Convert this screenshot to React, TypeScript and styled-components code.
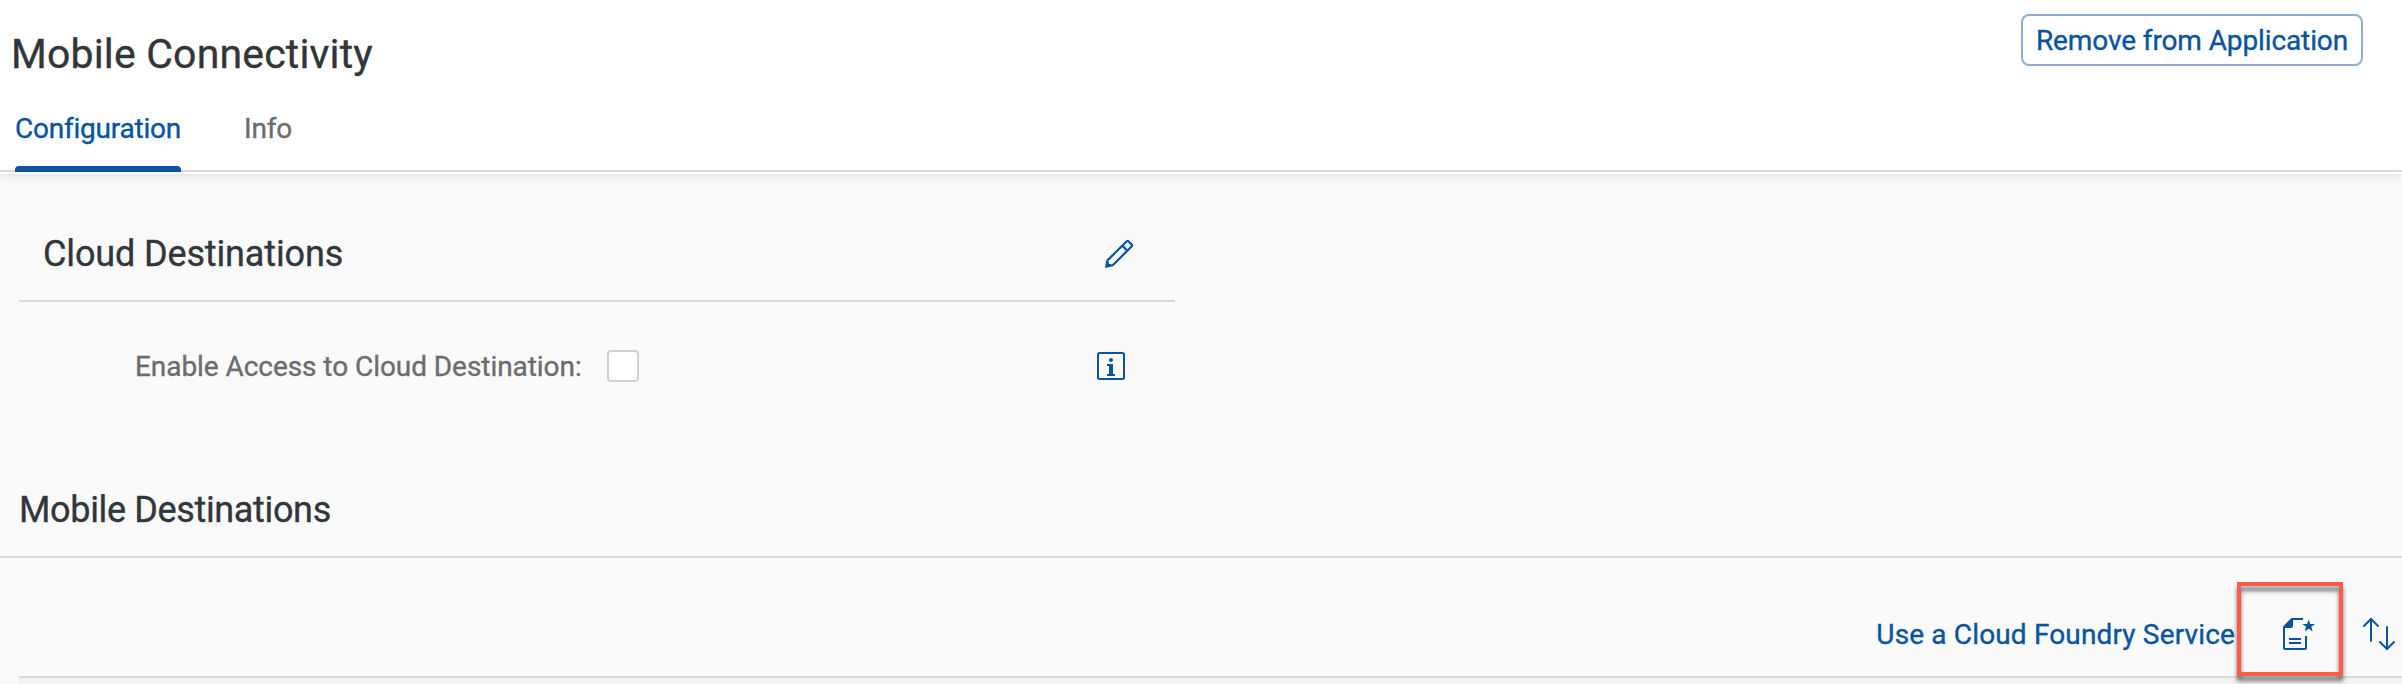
import React from 'react';
import styled, { createGlobalStyle } from 'styled-components';

const blue = '#0854a0';
const ink = '#32363a';
const muted = '#6a6d70';
const line = '#d9d9d9';

const GlobalStyle = createGlobalStyle`
  *, *::before, *::after { box-sizing: border-box; }
  body {
    margin: 0;
    background: #fafafa;
    color: ${ink};
    font-family: Roboto, "Open Sans", sans-serif;
    font-size: 28px;
    -webkit-text-stroke: 0.35px currentColor;
    overflow: hidden;
  }
  button { font: inherit; background: none; border: 0; margin: 0; padding: 0; }
  h1, h2 { margin: 0; font-weight: 400; }
  svg { display: block; }
`;

const Page = styled.div`
  display: flex;
  flex-direction: column;
  height: 684px;
  overflow: hidden;
`;

const Header = styled.header`
  display: flex;
  flex-direction: column;
  height: 174px;
  flex: none;
  background: #fff;
  box-shadow: 0 2px 8px rgba(0, 0, 0, 0.1);
`;

const TitleRow = styled.div`
  display: flex;
  align-items: flex-start;
  justify-content: space-between;
  height: 104px;
  padding: 14px 39px 0 11px;
`;

const PageTitle = styled.h1`
  margin-top: 16px;
  font-size: 41px;
  line-height: 48px;
  letter-spacing: 0.17px;
`;

const OutlineButton = styled.button`
  width: 342px;
  height: 52px;
  padding-top: 1px;
  border: 2px solid #8caed2;
  border-radius: 8px;
  color: ${blue};
  line-height: 47px;
  letter-spacing: -0.11px;
  white-space: nowrap;
`;

const TabBar = styled.nav`
  display: flex;
  gap: 63px;
  height: 68px;
  padding-left: 15px;
  border-bottom: 2px solid ${line};
`;

const Tab = styled.button<{ $active?: boolean }>`
  display: flex;
  flex-direction: column;
  justify-content: space-between;
  height: 68px;
  padding-top: 5px;
  color: ${p => (p.$active ? blue : muted)};
  line-height: 40px;
  letter-spacing: -0.22px;
  width: ${p => (p.$active ? '166px' : 'auto')};

  &::after {
    content: '';
    width: 100%;
    height: 6px;
    border-radius: 4px 4px 0 0;
    background: ${p => (p.$active ? blue : 'transparent')};
  }
`;

const CloudPanel = styled.section`
  width: 1156px;
  margin: 36px 0 0 19px;
  flex: none;
`;

const PanelHeader = styled.div`
  display: flex;
  align-items: center;
  justify-content: space-between;
  height: 92px;
  padding: 0 42px 2px 24px;
  border-bottom: 2px solid ${line};
`;

const SectionTitle = styled.h2<{ $spacing: number }>`
  font-size: 36px;
  line-height: 48px;
  letter-spacing: ${p => p.$spacing}px;
`;

const FormRow = styled.div`
  display: flex;
  align-items: center;
  height: 32px;
  margin-top: 48px;
  padding: 0 50px 0 116px;
`;

const Label = styled.label`
  width: 472px;
  padding-top: 2px;
  color: ${muted};
  line-height: 32px;
  letter-spacing: -0.06px;
  white-space: nowrap;
`;

const Checkbox = styled.span`
  width: 32px;
  height: 32px;
  border: 2px solid #cdd1d6;
  border-radius: 4px;
  background: #fff;
`;

const IconButton = styled.button`
  display: flex;
  color: ${blue};
`;

const InfoButton = styled(IconButton)`
  margin-left: auto;
`;

const MobileHeader = styled.div`
  display: flex;
  align-items: flex-start;
  height: 72px;
  margin-top: 104px;
  padding-left: 19px;
  border-bottom: 2px solid ${line};
  flex: none;
`;

const Toolbar = styled.div`
  display: flex;
  align-items: flex-end;
  justify-content: flex-end;
  height: 118px;
  padding-right: 6px;
  flex: none;
`;

const LinkButton = styled.button`
  margin: 0 2px 21px 0;
  color: ${blue};
  line-height: 40px;
  letter-spacing: 0.15px;
  white-space: nowrap;
`;

const HighlightedButton = styled(IconButton)`
  position: relative;
  width: 106px;
  height: 94px;
  padding: 36px 0 0 46px;
`;

const Highlight = styled.span`
  position: absolute;
  inset: 0;
  border: 4px solid #ff5a4a;
  filter: drop-shadow(0 5px 2px rgba(0, 0, 0, 0.55));
`;

const SortButton = styled(IconButton)`
  margin: 0 0 25px 19px;
`;

const TableHead = styled.div`
  height: 8px;
  margin-left: 19px;
  border-top: 2px solid ${line};
  background: #f2f2f2;
  flex: none;
`;

const EditIcon = () => (
  <svg width="28" height="28" viewBox="0 0 28 28" fill="none" stroke="currentColor" strokeWidth="2.2">
    <path d="M2.2 20.6 21.8 1.3q.8-.7 1.6 0l3.4 3.4q.7.8 0 1.6L7.2 25.8" />
    <path d="m17.4 5.8 4.9 4.9" />
    <path d="m1.3 20 2.4 1.4.2 2.3 2.6.5 1.3 2L0 28Z" fill="currentColor" stroke="none" />
  </svg>
);

const InfoIcon = () => (
  <svg width="28" height="28" viewBox="0 0 28 28" fill="currentColor">
    <rect x="1" y="1" width="26" height="26" rx="1.5" fill="none" stroke="currentColor" strokeWidth="2" />
    <circle cx="14" cy="8" r="2" />
    <path d="M10 12h6v10h2v2h-8v-2h2v-8h-2z" />
  </svg>
);

const DocumentStarIcon = () => (
  <svg width="34" height="32" viewBox="0 0 34 32" fill="currentColor">
    <path d="M8.5 1H20M1 9v20.5q0 1.5 1.5 1.5h19q1.5 0 1.5-1.5V18M6 21h12M6 25h12" fill="none" stroke="currentColor" strokeWidth="2" />
    <path d="M8.5 0H10v8q0 2-2 2H0V8.5Z" />
    <path d="m25.7 1.5 1.6 4.4h4.7l-3.7 2.9 1.4 4.7-4-2.8-4 2.8 1.4-4.7-3.7-2.9h4.7Z" />
  </svg>
);

const SortIcon = () => (
  <svg width="34" height="34" viewBox="0 0 34 34" fill="none" stroke="currentColor" strokeWidth="2" strokeLinecap="round">
    <path d="M9 2.3V24M2 9l7-7 7 7M25 10v21.7M18 25l7 7 7-7" />
  </svg>
);

export default function App() {
  return (
    <Page>
      <GlobalStyle />
      <Header>
        <TitleRow>
          <PageTitle>Mobile Connectivity</PageTitle>
          <OutlineButton>Remove from Application</OutlineButton>
        </TitleRow>
        <TabBar>
          <Tab $active>Configuration</Tab>
          <Tab>Info</Tab>
        </TabBar>
      </Header>
      <CloudPanel>
        <PanelHeader>
          <SectionTitle $spacing={-0.14}>Cloud Destinations</SectionTitle>
          <IconButton aria-label="Edit"><EditIcon /></IconButton>
        </PanelHeader>
        <FormRow>
          <Label>Enable Access to Cloud Destination:</Label>
          <Checkbox role="checkbox" aria-checked={false} />
          <InfoButton aria-label="Information"><InfoIcon /></InfoButton>
        </FormRow>
      </CloudPanel>
      <MobileHeader>
        <SectionTitle $spacing={-0.35}>Mobile Destinations</SectionTitle>
      </MobileHeader>
      <Toolbar>
        <LinkButton>Use a Cloud Foundry Service</LinkButton>
        <HighlightedButton aria-label="Create">
          <DocumentStarIcon />
          <Highlight />
        </HighlightedButton>
        <SortButton aria-label="Sort"><SortIcon /></SortButton>
      </Toolbar>
      <TableHead />
    </Page>
  );
}
